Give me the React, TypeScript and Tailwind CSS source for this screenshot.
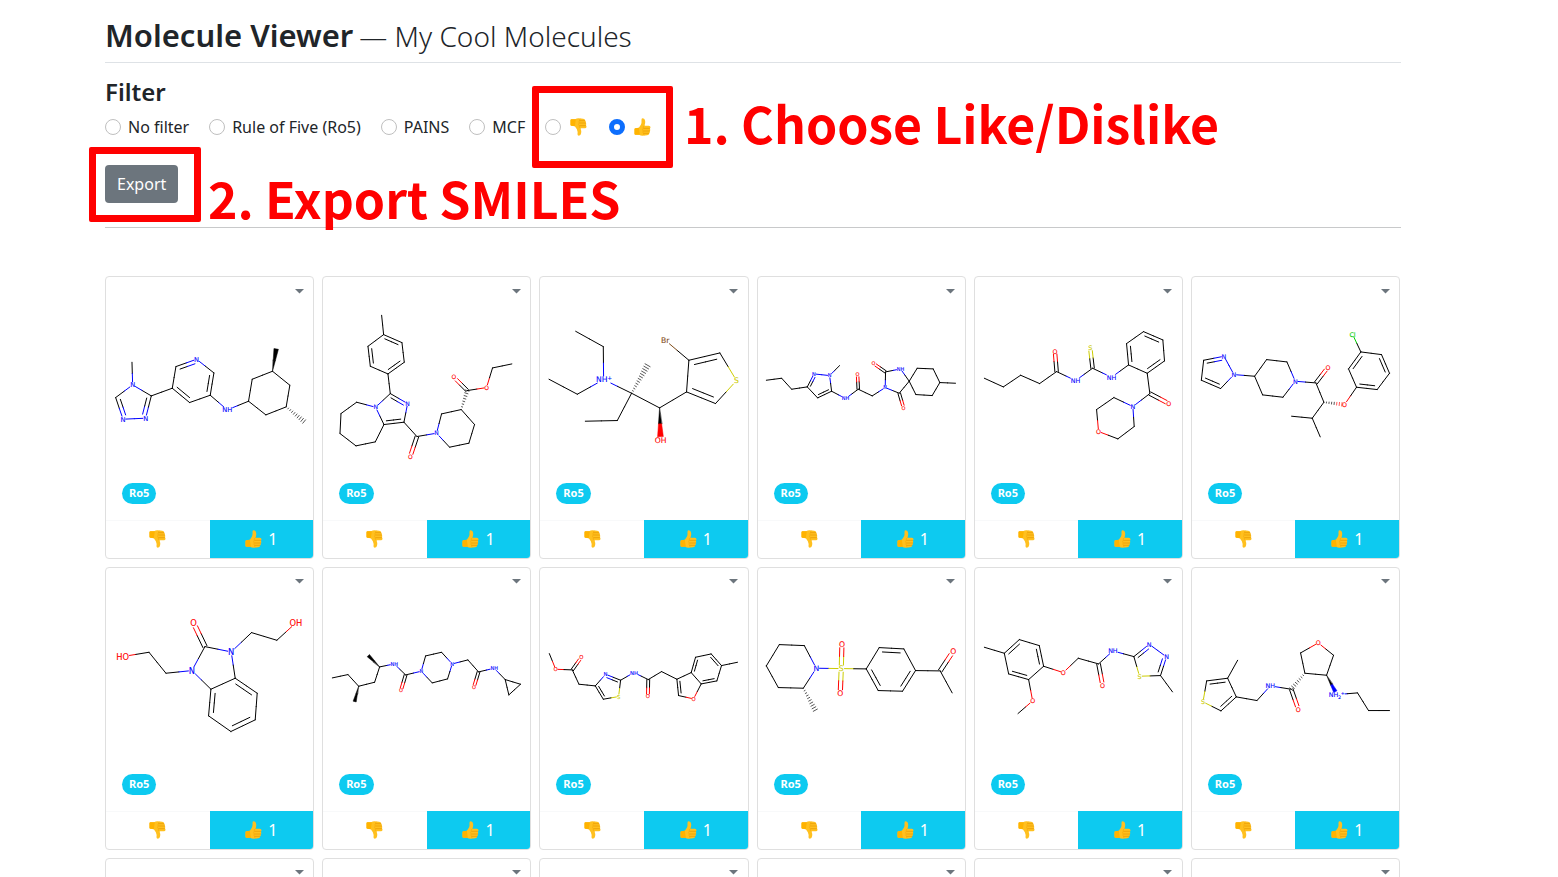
import { useState } from "react";

type Atom = { x: number; y: number; label: string };
type Kind = "-" | "=" | "w" | "h";
type Bond = { a: number; b: number; kind: Kind };
type MoleculeData = { name: string; left: number; top: number; font: number; atoms: string; bonds: string };

const ELEMENT_COLORS: Record<string, string> = {
  N: "#0000ff",
  O: "#ff0000",
  S: "#cccc00",
  B: "#7f4c19",
  C: "#00cc00",
};

/* Atoms are "x,y[,label]"; bonds join atom indexes: - single, = double, w wedge, h hashed. */
const MOLECULES: MoleculeData[] = [
  {
    name: "Triazolyl pyridine amine", left: 18, top: 21, font: 20,
    atoms: "96,277 98,345,N 47,383 69,448,N 137,445,N 154,378 217,355 228,290 290,268,N 342,309 331,376 269,398 382,420,NH 446,394 457,328 518,304 570,346 559,411 498,435 529,237 613,455",
    bonds: "0-1 1-2 2=3 3-4 4=5 5-1 5-6 6-7 7=8 8-9 9=10 10-11 11=6 10-12 12-13 13-14 14-15 15-16 16-17 17-18 18-13 15w19 17h20",
  },
  {
    name: "Imidazoazepine ester", left: 19, top: 21, font: 18,
    atoms: "195,136 201,194 256,218 263,277 214,312 161,289 154,229 221,371 273,401,N 262,457 202,464 177,412,N 120,397 73,431 70,491 118,528 176,516 301,500 281,560,O 360,490,N 375,432 434,419 474,464 457,520 399,532 452,362 412,322,O 510,353,O 528,294 586,282",
    bonds: "0-1 1=2 2-3 3=4 4-5 5=6 6-1 4-7 7=8 8-9 9=10 10-11 11-7 11-12 12-13 13-14 14-15 15-16 16-10 9-17 17=18 17-19 19-20 20-21 21-22 22-23 23-24 24-19 21h25 25=26 25-27 27-28 28-29",
  },
  {
    name: "Bromothiophene alcohol", left: 15, top: 21, font: 23,
    atoms: "122,184 205,230 206,329,NH+ 127,373 42,328 290,370 338,286 247,452 151,454 374,414 377,511,OH 455,366 462,271 391,211,Br 555,249 605,332,S 542,401",
    bonds: "0-1 1-2 2-3 3-4 2-5 5h6 5-7 7-8 5-9 9w10 9-11 11-12 12-13 12=14 14-15 15-16 16=11",
  },
  {
    name: "Pyrazole hydantoin amide", left: 18, top: 21, font: 15,
    atoms: "43,331 89,325 119,358 166,351 186,312,N 233,317,N 263,287 239,364 197,384 281,386,NH 319,358 317,314,O 361,378 400,353,N 401,306 365,281,O 446,297,NH 472,334 442,370 455,414,O 496,295 544,297 564,338 541,377 492,374 611,340",
    bonds: "0-1 1-2 2-3 3=4 4-5 5-6 5-7 7=8 8-3 7-9 9-10 10=11 10-12 12-13 13-14 14=15 14-16 16-17 17-18 18-13 18=19 17-20 20-21 21-22 22-23 23-24 24-17 22-25",
  },
  {
    name: "Morpholine thiourea", left: 15, top: 21, font: 19,
    atoms: "43,325 100,351 152,316 209,341 260,305 255,244,O 317,332,NH 368,295 361,234,S 425,322,NH 476,285 470,221 521,185 579,210 584,273 532,310 540,371 597,401,O 489,410,N 432,383 380,419 386,485,O 444,507 493,470",
    bonds: "0-1 1-2 2-3 3-4 4=5 4-6 6-7 7=8 7-9 9-10 10=11 11-12 12=13 13-14 14=15 15-10 15-16 16=17 16-18 18-19 19-20 20-21 21-22 22-23 23-18",
  },
  {
    name: "Chlorophenoxy piperidine amide", left: 15, top: 21, font: 19,
    atoms: "43,331 50,271 111,259,N 141,314,N 101,356 203,319 239,269 300,276 325,334,N 288,382 227,375 387,339 423,292,O 411,397 473,404,O 376,445 314,439 400,501 509,352 485,297 522,246 497,193,Cl 584,254 608,310 571,359",
    bonds: "0-1 1=2 2-3 3-4 4=0 3-5 5-6 6-7 7-8 8-9 9-10 10-5 8-11 11=12 11-13 13h14 13-15 15-16 15-17 14-18 18-19 19=20 20-21 20-22 22=23 23-24 24=18",
  },
  {
    name: "Benzimidazolone diol", left: 18, top: 23, font: 25,
    atoms: "68,289,HO 147,276 198,339 276,331,N 315,259 281,188,O 394,275,N 455,217 531,240 588,188,OH 406,354 333,387 326,467 393,514 466,479 472,399",
    bonds: "0-1 1-2 2-3 3-4 4=5 4-6 6-7 7-8 8-9 6-10 10-11 11-3 11=12 12-13 13=14 14-15 15=10",
  },
  {
    name: "Piperazine cyclopropyl amide", left: 669, top: 23, font: 15,
    atoms: "697,353 744,343 776,378 764,424 824,366 839,320 805,286 883,311,NH 917,344 903,391,O 964,333,N 977,287 1025,276 1057,311,N 1043,356 997,368 1104,299 1136,335 1122,381,O 1183,324,NH 1216,358 1262,372 1227,404",
    bonds: "0-1 1-2 2w3 2-4 4-5 5w6 5-7 7-8 8=9 8-10 10-11 11-12 12-13 13-14 14-15 15-10 13-16 16-17 17=18 17-19 19-20 20-21 21-22 22-20",
  },
  {
    name: "Benzofuran thiazole amide", left: 15, top: -97, font: 16,
    atoms: "43,160 62,207,O 112,209 139,171,O 132,252 181,257 212,222,N 257,240 251,289,S 205,297 297,217,NH 340,238 339,288,O 380,214 426,237 431,286 476,296,O 499,251 469,217 482,171 529,161 560,196 546,242 608,186",
    bonds: "0-1 1-2 2=3 2-4 4-5 5-6 6=7 7-8 8-9 9=5 7-10 10-11 11=12 11-13 13-14 14=15 15-16 16-17 17-18 18-14 18=19 19-20 20=21 21-22 22=17 21-23",
  },
  {
    name: "Piperidine sulfonyl acetophenone", left: 669, top: -97, font: 23,
    atoms: "844,204,N 808,136 733,133 694,197 730,262 805,264 841,330 919,205,S 921,132,O 916,279,O 994,206 1033,142 1107,146 1142,211 1103,273 1030,271 1216,212 1255,153,O 1252,278",
    bonds: "0-1 1-2 2-3 3-4 4-5 5-0 5h6 0-7 7=8 7=9 7-10 10-11 11=12 12-13 13=14 14-15 15=10 13-16 16=17 16-18",
  },
  {
    name: "Methoxyphenoxy thiadiazole amide", left: 15, top: -97, font: 19,
    atoms: "43,141 103,159 148,118 208,136 221,198 176,238 116,221 280,217,O 325,174 386,191 398,255,O 429,152,NH 492,169 538,132,N 590,170,N 572,226 509,228,S 608,275 188,302,O 144,340",
    bonds: "0-1 1=2 2-3 3=4 4-5 5=6 6-1 4-7 7-8 8-9 9=10 9-11 11-12 12=13 13-14 14=15 15-16 16-12 15-17 5-18 18-19",
  },
  {
    name: "Thiophene tetrahydrofuran amide", left: 666, top: -97, font: 19,
    atoms: "803,180 773,234 710,242 699,305,S 753,332 799,290 861,301 901,257,NH 964,267 985,327,O 1005,219 992,158 1045,128,O 1091,165 1070,225 1101,283,NH2+ 1163,278 1196,331 1259,331",
    bonds: "0-1 1=2 2-3 3-4 4=5 5-1 5-6 6-7 7-8 8=9 10h8 10-11 11-12 12-13 13-14 14-10 14w15 15-16 16-17 17-18",
  },
];

function parseAtoms(text: string): Atom[] {
  return text.split(" ").map((part) => {
    const [x, y, label = ""] = part.split(",");
    return { x: Number(x), y: Number(y), label };
  });
}

function parseBonds(text: string): Bond[] {
  return text.split(" ").map((part) => {
    const [, a, kind, b] = part.match(/(\d+)([-=wh])(\d+)/)!;
    return { a: Number(a), b: Number(b), kind: kind as Kind };
  });
}

/* Shortest cycle through a bond, or null when the bond is not part of a ring. */
function findRing(bond: Bond, bonds: Bond[]): number[] | null {
  const queue: number[][] = [[bond.a]];
  const seen = new Set([bond.a]);
  while (queue.length) {
    const path = queue.shift()!;
    const last = path[path.length - 1];
    if (last === bond.b) return path;
    for (const other of bonds) {
      if (other === bond) continue;
      const next = other.a === last ? other.b : other.b === last ? other.a : -1;
      if (next >= 0 && !seen.has(next)) {
        seen.add(next);
        queue.push([...path, next]);
      }
    }
  }
  return null;
}

function colorOf(atom: Atom) {
  return ELEMENT_COLORS[atom.label.replace(/^H/, "")[0]] ?? "#000000";
}

const LABEL_HALF_WIDTHS = [0, 0.42, 0.82, 0.98, 1.3];

/* Share of a bond that the label at its end covers. */
function labelTrim(atom: Atom, dx: number, dy: number, font: number) {
  if (!atom.label) return 0;
  const halfWidth = font * LABEL_HALF_WIDTHS[atom.label.length];
  const halfHeight = font * 0.46;
  return Math.min(halfWidth / Math.max(Math.abs(dx), 1), halfHeight / Math.max(Math.abs(dy), 1), 0.45);
}

function BondShape({ bond, bonds, atoms, font }: { bond: Bond; bonds: Bond[]; atoms: Atom[]; font: number }) {
  const a = atoms[bond.a];
  const b = atoms[bond.b];
  const dx = b.x - a.x;
  const dy = b.y - a.y;
  const length = Math.hypot(dx, dy);
  const nx = -dy / length;
  const ny = dx / length;
  const start = labelTrim(a, dx, dy, font);
  const end = 1 - labelTrim(b, dx, dy, font);

  const stroke = (from: number, to: number, shift: number, key: string) => {
    const point = (t: number) => `${a.x + dx * t + nx * shift} ${a.y + dy * t + ny * shift}`;
    return (
      <g key={key}>
        <path d={`M${point(from)}L${point(0.5)}`} stroke={colorOf(a)} />
        <path d={`M${point(0.5)}L${point(to)}`} stroke={colorOf(b)} />
      </g>
    );
  };

  if (bond.kind === "w") {
    const corner = (t: number, side: number) =>
      `${a.x + dx * t + nx * side * t * length * 0.1} ${a.y + dy * t + ny * side * t * length * 0.1}`;
    return (
      <g strokeWidth="1.5">
        <path d={`M${a.x} ${a.y}L${corner(0.5, 1)}L${corner(0.5, -1)}Z`} fill="#000" stroke="#000" />
        <path
          d={`M${corner(0.5, 1)}L${corner(end, 1)}L${corner(end, -1)}L${corner(0.5, -1)}Z`}
          fill={colorOf(b)}
          stroke={colorOf(b)}
        />
      </g>
    );
  }

  if (bond.kind === "h") {
    const count = Math.round((length * end) / 8);
    return (
      <g strokeWidth="2">
        {Array.from({ length: count }, (_, i) => {
          const t = ((i + 1) / count) * end;
          const half = 1 + t * length * 0.08;
          const x = a.x + dx * t;
          const y = a.y + dy * t;
          return (
            <path
              key={i}
              d={`M${x + nx * half} ${y + ny * half}L${x - nx * half} ${y - ny * half}`}
              stroke={t > 0.5 ? colorOf(b) : "#000"}
            />
          );
        })}
      </g>
    );
  }

  if (bond.kind === "=") {
    const ring = findRing(bond, bonds);
    const gap = length * 0.17;
    if (!ring) {
      return <>{[stroke(start, end, gap / 2, "l"), stroke(start, end, -gap / 2, "r")]}</>;
    }
    const cx = ring.reduce((sum, i) => sum + atoms[i].x, 0) / ring.length;
    const cy = ring.reduce((sum, i) => sum + atoms[i].y, 0) / ring.length;
    const side = (cx - a.x) * nx + (cy - a.y) * ny > 0 ? 1 : -1;
    return <>{[stroke(start, end, 0, "o"), stroke(Math.max(start, 0.14), Math.min(end, 0.86), gap * side, "i")]}</>;
  }

  return stroke(start, end, 0, "s");
}

function AtomLabel({ atom, font }: { atom: Atom; font: number }) {
  const charged = atom.label.endsWith("+");
  const counted = atom.label.includes("2");
  const base = atom.label.replace(/[2+]/g, "");
  const x = atom.x - font * ((charged ? 0.25 : 0) + (counted ? 0.3 : 0));
  const y = atom.y + font * 0.37;
  const color = colorOf(atom);
  return (
    <g fill={color} stroke={color} strokeWidth="0.3" fontSize={font} className="font-['DejaVu_Sans',sans-serif]">
      <text x={x} y={y} textAnchor="middle">{base}</text>
      {counted && <text x={x + font * 0.74} y={y + font * 0.3} fontSize={font * 0.75}>2</text>}
      {charged && (
        <text x={x + font * (counted ? 1.15 : 0.74)} y={y - font * 0.35} fontSize={font * 0.75}>+</text>
      )}
    </g>
  );
}

function Molecule({ data }: { data: MoleculeData }) {
  const atoms = parseAtoms(data.atoms);
  const bonds = parseBonds(data.bonds);
  return (
    <svg
      viewBox={`${data.left} ${data.top} 622 618`}
      className="block aspect-[622/618] w-full"
      fill="none"
      strokeWidth="3"
      strokeLinecap="round"
      role="img"
      aria-label={data.name}
    >
      {bonds.map((bond, i) => (
        <BondShape key={i} bond={bond} bonds={bonds} atoms={atoms} font={data.font} />
      ))}
      {atoms.map((atom, i) => atom.label && <AtomLabel key={i} atom={atom} font={data.font} />)}
    </svg>
  );
}

function Thumb({ down = false }: { down?: boolean }) {
  return (
    <svg viewBox="0 0 50 54" className={down ? "h-[18px] w-[17px] -scale-y-100" : "h-[18px] w-[17px]"} aria-hidden="true">
      <path d="M1 34Q1 31 4 31L14 29L20 20Q23 14 22 5Q22 1 26 1Q32 1 33 9Q34 16 31 23L44 23Q49 23 49 28Q49 31 47 32Q50 36 47 40Q48 44 45 46Q45 52 39 52L25 53Q19 53 15 50L4 50Q1 50 1 47Z" fill="#ffc01f" />
      <path d="M1 34Q1 31 4 31L14 29L17 50L4 50Q1 50 1 47Z" fill="#ffb300" />
      <path d="M29 31H46M29 39H46M29 46H44" stroke="#e59600" strokeWidth="2" fill="none" strokeLinecap="round" />
      <path d="M31 23Q26 25 27 31Q24 35 27 39Q25 43 28 46Q28 50 31 52" stroke="#f0a000" strokeWidth="1.5" fill="none" />
    </svg>
  );
}

function CardMenu() {
  return (
    <button type="button" aria-label="Card menu" className="absolute top-2 right-2 flex h-3 w-3 items-center justify-center text-[#6c757d]">
      <svg viewBox="0 0 9 5" className="h-[5px] w-[9px]" fill="currentColor" aria-hidden="true">
        <path d="M0 0H9L4.5 4.5Z" />
      </svg>
    </button>
  );
}

function MoleculeCard({ data }: { data?: MoleculeData }) {
  return (
    <article className="relative rounded border border-[#dfdfdf] bg-white">
      <CardMenu />
      {data ? (
        <>
          <Molecule data={data} />
          <div className="flex px-4 pb-4">
            <span className="flex h-[21px] items-center rounded-full bg-[#0dcaf0] px-[7px] text-[11px] font-bold text-white">Ro5</span>
          </div>
          <div className="grid h-[38px] grid-cols-2">
            <button type="button" aria-label="Dislike" className="flex items-center justify-center border-t border-[#f8f9fa]">
              <Thumb down />
            </button>
            <button type="button" aria-label="Like" className="flex items-center justify-center gap-1.5 rounded-br-[3px] bg-[#0dcaf0] text-base text-white">
              <Thumb />
              <span>1</span>
            </button>
          </div>
        </>
      ) : (
        <div className="aspect-square w-full" />
      )}
    </article>
  );
}

const FILTERS = [
  { id: "none", text: "No filter" },
  { id: "ro5", text: "Rule of Five (Ro5)" },
  { id: "pains", text: "PAINS" },
  { id: "mcf", text: "MCF" },
  { id: "dislike", text: "" },
  { id: "like", text: "" },
];

const PENDING_CARDS = [1, 2, 3, 4, 5, 6];

export default function App() {
  const [filter, setFilter] = useState("like");
  return (
    <main className="h-screen overflow-hidden bg-white pr-[157px] pl-[105px] font-['Noto_Sans',sans-serif] text-[#212529]">
      <header className="flex h-[63px] items-center border-b border-[#dee2e6] pt-2">
        <h1 className="flex items-baseline gap-1.5 leading-10">
          <span className="text-[31px] font-semibold">Molecule Viewer</span>
          <span className="text-[28px] font-light">— My Cool Molecules</span>
        </h1>
      </header>

      <section className="relative border-b border-[#c8c9ca] pt-[15px] pb-6">
        <h2 className="text-2xl leading-7 font-semibold">Filter</h2>
        <fieldset aria-label="Filter molecules" className="mt-[9px] flex h-6 items-center gap-5">
          {FILTERS.map(({ id, text }) => (
            <label key={id} className="flex items-center gap-[7px] text-base whitespace-nowrap">
              <input
                type="radio"
                name="filter"
                checked={filter === id}
                onChange={() => setFilter(id)}
                aria-label={text || id}
                className="h-4 w-4 appearance-none rounded-full border border-[#bfbfbf] bg-white checked:border-[5px] checked:border-[#0d6efd]"
              />
              {text || (
                <span className="px-0.5">
                  <Thumb down={id === "dislike"} />
                </span>
              )}
            </label>
          ))}
        </fieldset>
        <button type="button" className="mt-[26px] h-[38px] rounded bg-[#6c757d] px-3 text-base text-white">
          Export
        </button>

        <div className="pointer-events-none absolute top-[23px] left-[427px] h-[82px] w-[141px] rounded-[2px] border-[7px] border-[#ff0000]" />
        <p className="pointer-events-none absolute top-[33px] left-[579px] font-['Noto_Sans_CJK_SC',sans-serif] text-[50px] leading-[52px] font-bold whitespace-nowrap text-[#ff0000]">
          1. Choose Like/Dislike
        </p>
        <div className="pointer-events-none absolute top-[84px] -left-4 h-[75px] w-28 rounded-[2px] border-[7px] border-[#ff0000]" />
        <p className="pointer-events-none absolute top-[108px] left-[103px] font-['Noto_Sans_CJK_SC',sans-serif] text-[50px] leading-[52px] font-bold whitespace-nowrap text-[#ff0000]">
          2. Export SMILES
        </p>
      </section>

      <section aria-label="Molecules" className="mt-12 mr-px grid grid-cols-6 gap-2">
        {MOLECULES.map((data) => (
          <MoleculeCard key={data.name} data={data} />
        ))}
        {PENDING_CARDS.map((slot) => (
          <MoleculeCard key={slot} />
        ))}
      </section>
    </main>
  );
}
